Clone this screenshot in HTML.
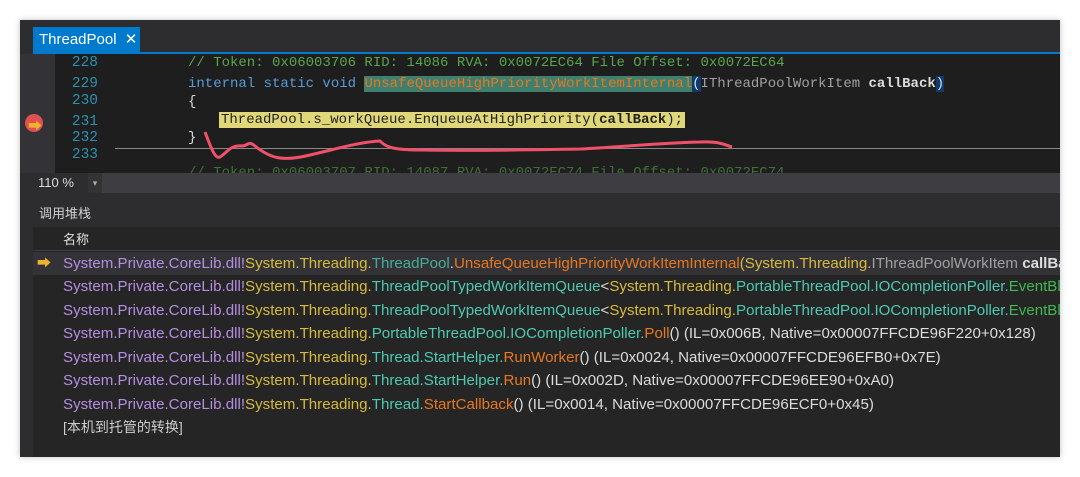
<!DOCTYPE html>
<html><head><meta charset="utf-8"><style>
*{margin:0;padding:0;box-sizing:border-box}
body{width:1080px;height:477px;background:#fff;position:relative;overflow:hidden;font-family:"Liberation Sans","Noto Sans CJK SC",sans-serif}
.win{position:absolute;left:20px;top:20px;width:1040px;height:437px;background:#2d2d30;box-shadow:0 0 6px rgba(0,0,0,.25);overflow:hidden}
.tab{position:absolute;left:13px;top:7px;width:107px;height:25px;background:#007acc;color:#fff;font-size:15px;line-height:25px;padding-left:6px}
.tabline{position:absolute;left:13px;top:32px;width:1027px;height:2px;background:#007acc}
.code{position:absolute;left:35px;top:34px;width:1005px;height:119px;background:#1e1e1e;overflow:hidden}
.gut{position:absolute;left:0;top:34px;width:35px;height:119px;background:#333337}
.ln{position:absolute;left:36px;width:42px;text-align:right;color:#2b91af;font-family:"Liberation Mono",monospace;font-size:14.5px}
.cl{position:absolute;font-family:"Liberation Mono",monospace;font-size:14px;white-space:pre;color:#dcdcdc}
.zoom{position:absolute;left:0;top:153px;width:1040px;height:20px;background:#3e3e42}
.panel{position:absolute;left:13px;top:180px;width:1027px;height:257px;background:#252526;overflow:hidden}
.ptitle{position:absolute;left:0;top:0;width:1027px;height:27px;background:#2d2d30;color:#d0d0d0;font-size:13px;line-height:27px;padding-left:6px}
.hdr{position:absolute;left:0;top:28px;width:1027px;height:23px;background:#252526;border-bottom:1px solid #3f3f46;color:#e0e0e0;font-size:13px;line-height:23px;padding-left:30px}
.row{position:absolute;left:30px;font-size:15.1px;white-space:nowrap;color:#dcdcdc;height:23px;line-height:23px}
.p{color:#b48ee0}.y{color:#d7ba3d}.t{color:#4ec9b0}.o{color:#e6781e}.g{color:#3fb950}.w{color:#dcdcdc}
</style></head><body>
<div class="win">
<div class="tab">ThreadPool <span style="margin-left:4px">✕</span></div>
<div class="tabline"></div>
<div class="gut"></div>
<div class="code">
</div>
<div class="ln" style="top:35px">228</div>
<div class="ln" style="top:56px">229</div>
<div class="ln" style="top:73px">230</div>
<div class="ln" style="top:94px">231</div>
<div class="ln" style="top:110px">232</div>
<div class="ln" style="top:127px">233</div>
<div style="position:absolute;left:5px;top:94px;width:18px;height:18px;border-radius:50%;background:#e05050"></div>
<div style="position:absolute;left:8px;top:96px;color:#f0b030;font-size:14px">➡</div>
<div class="cl" style="left:168px;top:35px;color:#57a64a">// Token: 0x06003706 RID: 14086 RVA: 0x0072EC64 File Offset: 0x0072EC64</div>
<div class="cl" style="left:168px;top:56px"><span style="color:#569cd6">internal static void </span><span style="color:#e6781e;background:#3f7f6f">UnsafeQueueHighPriorityWorkItemInternal</span><span style="background:#0e3a6e">(</span><span style="color:#a0a0a0">IThreadPoolWorkItem </span><b>callBack</b><span style="background:#0e3a6e">)</span></div>
<div class="cl" style="left:168px;top:74px">{</div>
<div class="cl" style="left:199px;top:92px;background:#e0d878;color:#222;padding:0 2px">ThreadPool.s_workQueue.EnqueueAtHighPriority(<b>callBack</b>);</div>
<div class="cl" style="left:168px;top:110px">}</div>
<div style="position:absolute;left:95px;top:128px;width:945px;height:1px;background:#888"></div>
<div class="cl" style="left:168px;top:145px;color:#57a64a;opacity:.6">// Token: 0x06003707 RID: 14087 RVA: 0x0072EC74 File Offset: 0x0072EC74</div>
<svg style="position:absolute;left:0;top:0" width="1040" height="160"><path d="M185 112 C190 125,195 140,200 137 C208 132,210 125,222 126 C228 126,228 120,235 126 C250 138,262 142,290 135 C320 128,340 122,360 121 C365 126,370 130,400 130 C460 131,500 130,560 129 C600 127,640 123,680 122 C700 121,705 125,712 127" stroke="#f0506a" stroke-width="3" fill="none"/></svg>
<div class="zoom"><div style="position:absolute;left:0;top:0;width:80px;height:20px;background:#2d2d30;color:#ddd;font-size:13px;line-height:20px;padding-left:18px;border-right:1px solid #3e3e42">110 %</div><div style="position:absolute;left:68px;top:0;width:14px;height:20px;background:#333;color:#aaa;font-size:9px;line-height:20px;text-align:center">▾</div></div>
<div class="panel">
<div class="ptitle">调用堆栈</div>
<div class="hdr">名称</div>
<div style="position:absolute;left:0;top:52px;width:1027px;height:23px;background:#333337"></div>
<div style="position:absolute;left:4px;top:53px;color:#f0b030;font-size:14px">➡</div>
<div class="row" style="top:52px"><span class="p">System.Private.CoreLib.dll!</span><span class="y">System.Threading.</span><span class="t" style="opacity:.8">ThreadPool</span>.<span class="o">UnsafeQueueHighPriorityWorkItemInternal</span><span class="y">(System.Threading.</span><span style="color:#a0a0a0">IThreadPoolWorkItem </span><b>callBack</b></div>
<div class="row" style="top:75px"><span class="p">System.Private.CoreLib.dll!</span><span class="y">System.Threading.</span><span class="t">ThreadPoolTypedWorkItemQueue</span>&lt;<span class="y">System.Threading.</span><span class="t">PortableThreadPool.IOCompletionPoller.</span><span class="g">EventBlah</span></div>
<div class="row" style="top:99px"><span class="p">System.Private.CoreLib.dll!</span><span class="y">System.Threading.</span><span class="t">ThreadPoolTypedWorkItemQueue</span>&lt;<span class="y">System.Threading.</span><span class="t">PortableThreadPool.IOCompletionPoller.</span><span class="g">EventBlah</span></div>
<div class="row" style="top:122px"><span class="p">System.Private.CoreLib.dll!</span><span class="y">System.Threading.</span><span class="t">PortableThreadPool.IOCompletionPoller.</span><span class="o">Poll</span>() (IL=0x006B, Native=0x00007FFCDE96F220+0x128)</div>
<div class="row" style="top:146px"><span class="p">System.Private.CoreLib.dll!</span><span class="y">System.Threading.</span><span class="t">Thread.StartHelper.</span><span class="o">RunWorker</span>() (IL=0x0024, Native=0x00007FFCDE96EFB0+0x7E)</div>
<div class="row" style="top:169px"><span class="p">System.Private.CoreLib.dll!</span><span class="y">System.Threading.</span><span class="t">Thread.StartHelper.</span><span class="o">Run</span>() (IL=0x002D, Native=0x00007FFCDE96EE90+0xA0)</div>
<div class="row" style="top:193px"><span class="p">System.Private.CoreLib.dll!</span><span class="y">System.Threading.</span><span class="t">Thread.</span><span class="o">StartCallback</span>() (IL=0x0014, Native=0x00007FFCDE96ECF0+0x45)</div>
<div class="row" style="top:216px;color:#ccc;font-size:14px">[本机到托管的转换]</div>
</div>
</div>
</body></html>
